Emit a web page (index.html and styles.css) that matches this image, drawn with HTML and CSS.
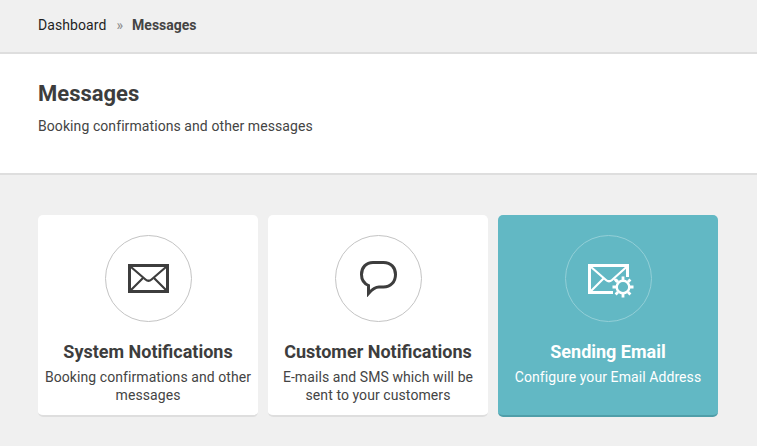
FILE: index.html
```html
<!DOCTYPE html>
<html lang="en">
<head>
    <meta charset="UTF-8">
    <title>Messages</title>
    <link rel="stylesheet" href="styles.css">
</head>
<body>
    <div class="breadcrumb">
        <a class="crumb-link" href="#">Dashboard</a>
        <span class="crumb-sep">»</span>
        <span class="crumb-current">Messages</span>
    </div>

    <div class="page-head">
        <h1>Messages</h1>
        <p>Booking confirmations and other messages</p>
    </div>

    <div class="cards">
        <a class="card" href="#">
            <div class="card-icon">
                <svg class="icon-mail" width="41" height="29" viewBox="0 0 41 29" fill="none" stroke="currentColor">
                    <rect x="1.500" y="1.500" width="38" height="26" stroke-width="3"/>
                    <path d="M3 3 L17.500 15.500 Q20.500 18 23.500 15.500 L38 3" stroke-width="2.200"/>
                    <path d="M3 26 L15 14 M38 26 L26 14" stroke-width="2.200"/>
                </svg>
            </div>
            <h2>System Notifications</h2>
            <p>Booking confirmations and other messages</p>
        </a>
        <a class="card" href="#">
            <div class="card-icon">
                <svg class="icon-bubble" width="37" height="36" viewBox="0 0 37 36" fill="none" stroke="currentColor">
                    <path d="M13 1.500 H23.500 C31 1.500 35.500 6.500 35.500 13.500 C35.500 21 30.500 26 23.500 26 H19 C15.500 26 12 28.500 8.500 32.500 V24.500 C4 22.500 1.500 18.500 1.500 13.500 C1.500 6.500 6 1.500 13 1.500 Z" stroke-width="3"/>
                </svg>
            </div>
            <h2>Customer Notifications</h2>
            <p>E-mails and SMS which will be sent to your customers</p>
        </a>
        <a class="card card-active" href="#">
            <div class="card-icon">
                <svg class="icon-gear" width="46" height="34" viewBox="0 0 46 34" fill="none" stroke="currentColor">
                    <path d="M25 28.500 H1.500 V1.500 H39.500 V13" stroke-width="3"/>
                    <path d="M3 3 L18 16 Q21 18.500 24 16 L38.500 3" stroke-width="2.200"/>
                    <path d="M3 27 L15.500 14.500" stroke-width="2.200"/>
                    <path d="M29 18 L26.500 15" stroke-width="2.200"/>
                    <circle cx="35" cy="23" r="6.300" stroke-width="2.400"/>
                    <path d="M35 12.500 V16 M35 30 V33.500 M24.500 23 H28 M42 23 H45.500 M27.600 15.600 L30 18 M40 28 L42.400 30.400 M27.600 30.400 L30 28 M40 18 L42.400 15.600" stroke-width="2.800"/>
                </svg>
            </div>
            <h2>Sending Email</h2>
            <p>Configure your Email Address</p>
        </a>
    </div>
</body>
</html>
```

FILE: styles.css
```css
* {
    box-sizing: border-box;
}

body {
    margin: 0;
    background-color: #f0f0f0;
    font-family: Roboto, "Liberation Sans", sans-serif;
    font-size: 14px;
    letter-spacing: .08px;
    color: #3d3d3d;
}

a {
    text-decoration: none;
}

.breadcrumb {
    display: flex;
    align-items: center;
    height: 54px;
    padding: 2px 38px 4px;
    border-bottom: 2px solid #dedede;
    line-height: 20px;
}

.crumb-link {
    color: #1f1f1f;
}

.crumb-sep {
    margin: 0 9px 0 10px;
    color: #8a8a8a;
    font-size: 14px;
}

.crumb-current {
    font-weight: 700;
    letter-spacing: 0;
    color: #444;
}

.page-head {
    height: 121px;
    padding: 27px 38px 0;
    background-color: white;
    border-bottom: 2px solid #dedede;
}

.page-head h1 {
    margin: 0;
    font-size: 22px;
    line-height: 26px;
    font-weight: 700;
    letter-spacing: 0;
    color: #3d3d3d;
}

.page-head p {
    margin: 9px 0 0;
    line-height: 20px;
    color: #444;
}

.cards {
    display: flex;
    gap: 10px;
    padding: 40px 39px 0 38px;
}

.card {
    display: flex;
    flex-direction: column;
    align-items: center;
    flex: 1;
    height: 202px;
    padding: 20px 5px 0;
    background-color: white;
    border-bottom: 2px solid #dedede;
    border-radius: 5px;
    color: #3d3d3d;
    text-align: center;
}

.card-icon {
    display: flex;
    align-items: center;
    justify-content: center;
    width: 87px;
    height: 87px;
    border: 1px solid #c4c4c4;
    border-radius: 50%;
}

.icon-mail {
    margin-left: 1px;
}

.icon-bubble {
    margin: 1px 0 0 1px;
}

.icon-gear {
    margin: 5px 0 0 5px;
}

.card h2 {
    margin: 18px 0 0;
    font-size: 18px;
    line-height: 24px;
    font-weight: 700;
    letter-spacing: 0;
}

.card p {
    margin: 4px 0 0;
    line-height: 18px;
    color: #444;
}

.card-active {
    background-color: #62b8c4;
    border-bottom-color: #4f9ea9;
    color: white;
}

.card-active .card-icon {
    border-color: #93cfd7;
}

.card-active p {
    color: white;
}
```
